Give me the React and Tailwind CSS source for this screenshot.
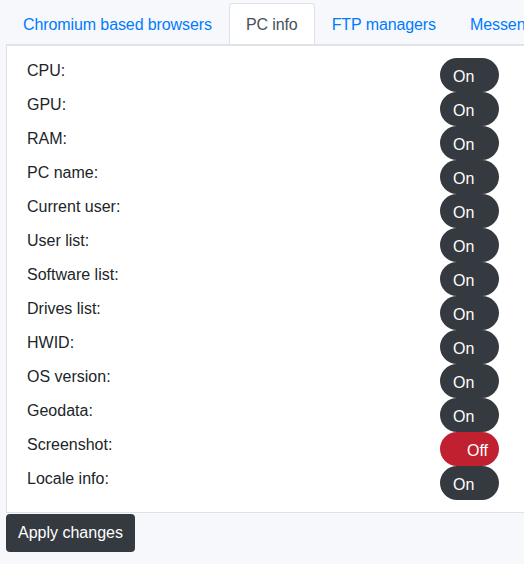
const items = [
  ["CPU:", true],
  ["GPU:", true],
  ["RAM:", true],
  ["PC name:", true],
  ["Current user:", true],
  ["User list:", true],
  ["Software list:", true],
  ["Drives list:", true],
  ["HWID:", true],
  ["OS version:", true],
  ["Geodata:", true],
  ["Screenshot:", false],
  ["Locale info:", true],
]

const tabs = ["Chromium based browsers", "PC info", "FTP managers", "Messengers"]

function Toggle({ on }) {
  return on ? (
    <div className="w-[59px] h-[34px] rounded-full bg-[#343a40] text-white flex items-center pl-[13px] pt-[4px] shrink-0">
      On
    </div>
  ) : (
    <div className="w-[59px] h-[34px] rounded-full bg-[#c0202f] text-white flex items-center justify-end pr-[11px] pt-[4px] shrink-0">
      Off
    </div>
  )
}

export default function App() {
  return (
    <div className="w-[524px] h-[564px] overflow-hidden bg-[#f7f8fb] text-[#212529] text-base font-['Liberation_Sans',sans-serif]">
      <div className="pl-[6px] pt-[3px] w-[700px]">
        <div className="flex border-b border-[#dee2e6] tracking-[-0.1px]">
          {tabs.map((t) => (
            <div
              key={t}
              className={
                t === "PC info"
                  ? "px-4 pt-[2px] h-[41px] flex items-center border border-b-0 border-[#dee2e6] rounded-t bg-white text-[#495057] whitespace-nowrap"
                  : "px-4 pt-[2px] h-[41px] flex items-center border border-transparent text-[#007bff] whitespace-nowrap"
              }
            >
              {t}
            </div>
          ))}
        </div>
        <div className="bg-white border border-[#dee2e6] border-t-[#e3e5e8] pl-[20px] pt-[12px] pb-[12px]">
          {items.map(([label, on]) => (
            <div key={label} className="flex h-[34px]">
              <div className="w-[413px] leading-6 pt-px">{label}</div>
              <Toggle on={on} />
            </div>
          ))}
        </div>
        <button className="mt-px h-[38px] px-3 rounded bg-[#343a40] text-white">
          Apply changes
        </button>
      </div>
    </div>
  )
}
